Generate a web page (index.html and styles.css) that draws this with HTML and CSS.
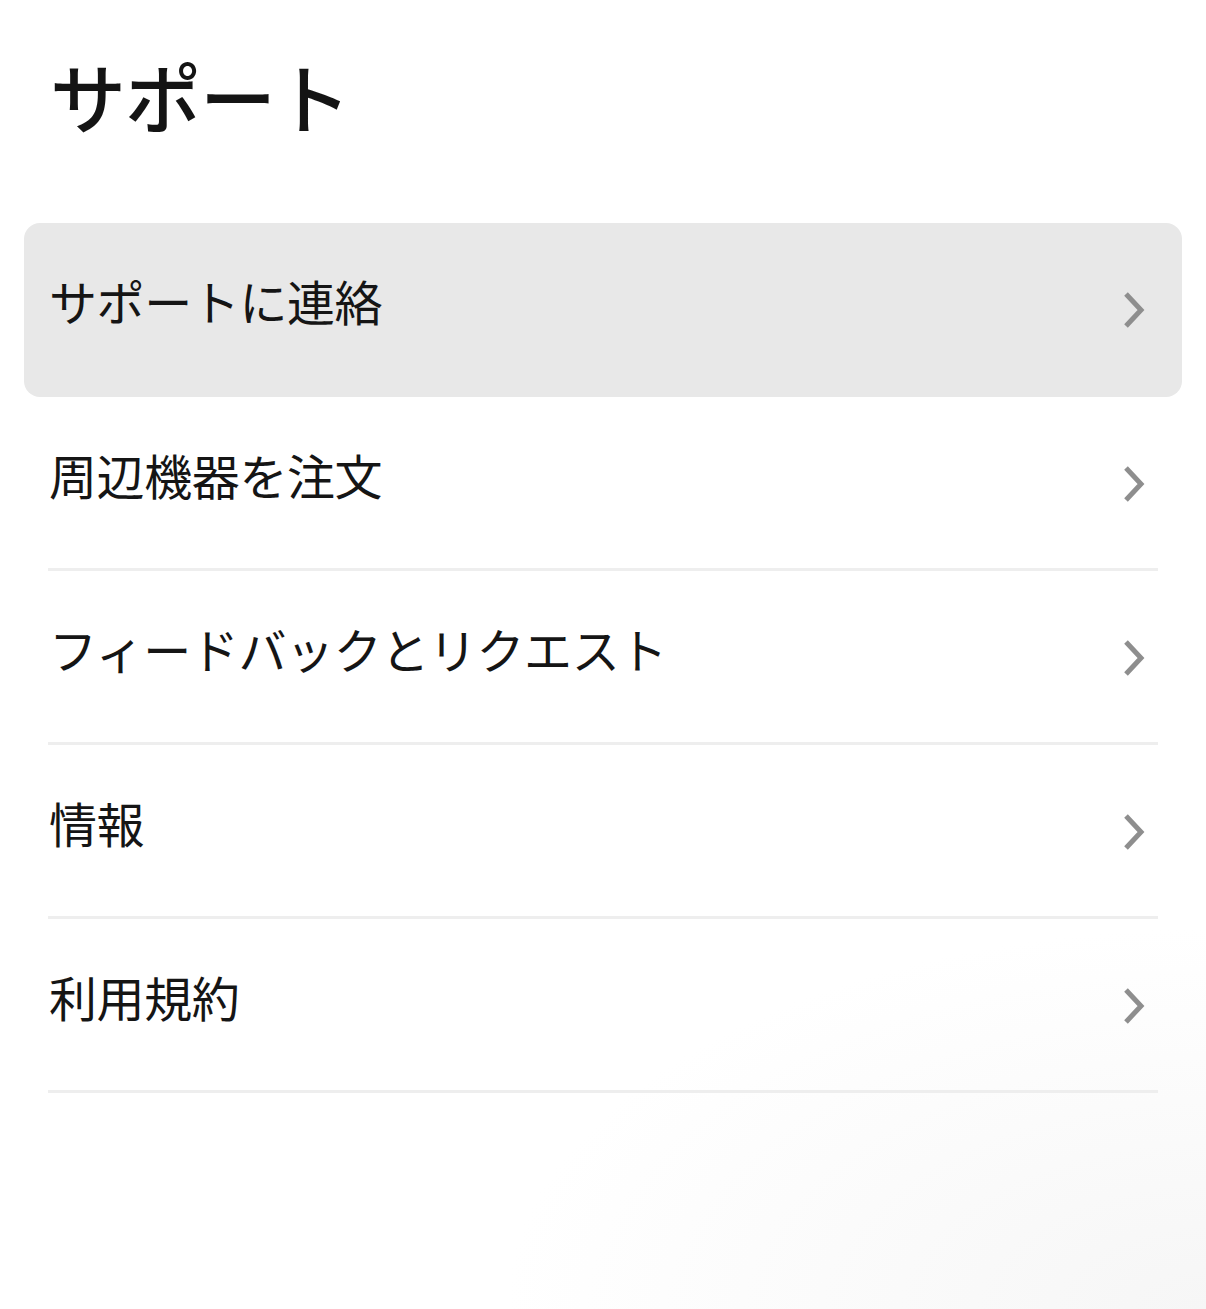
FILE: index.html
```html
<!DOCTYPE html>
<html lang="ja">

<head>
    <meta charset="UTF-8">
    <meta name="viewport" content="width=device-width, initial-scale=1.0">
    <title>サポート</title>
    <link rel="stylesheet" href="styles.css">
</head>

<body>
    <h1 class="page-title">サポート</h1>

    <ul class="menu">
        <li class="menu-item active">
            <span class="menu-label">サポートに連絡</span>
            <svg class="chevron" viewBox="0 0 24 40" width="24" height="40"><path d="M4 4 L19 20 L4 36" /></svg>
        </li>
        <li class="menu-item">
            <span class="menu-label">周辺機器を注文</span>
            <svg class="chevron" viewBox="0 0 24 40" width="24" height="40"><path d="M4 4 L19 20 L4 36" /></svg>
        </li>
        <li class="menu-item">
            <span class="menu-label">フィードバックとリクエスト</span>
            <svg class="chevron" viewBox="0 0 24 40" width="24" height="40"><path d="M4 4 L19 20 L4 36" /></svg>
        </li>
        <li class="menu-item">
            <span class="menu-label">情報</span>
            <svg class="chevron" viewBox="0 0 24 40" width="24" height="40"><path d="M4 4 L19 20 L4 36" /></svg>
        </li>
        <li class="menu-item">
            <span class="menu-label">利用規約</span>
            <svg class="chevron" viewBox="0 0 24 40" width="24" height="40"><path d="M4 4 L19 20 L4 36" /></svg>
        </li>
    </ul>
</body>
</html>
```

FILE: styles.css
```css
html {
    height: 100%;
}

body {
    margin: 0;
    min-height: 100%;
    font-family: "Noto Sans CJK JP", "Noto Sans", sans-serif;
    color: #141414;
    background: radial-gradient(ellipse 700px 380px at 100% 100%, #f6f6f6 0%, #fbfbfb 55%, #ffffff 100%);
}

.page-title {
    margin: 0;
    padding: 57px 0 0 50px;
    font-size: 76px;
    line-height: 76px;
    font-weight: 500;
    letter-spacing: -1px;
}

.menu {
    list-style: none;
    margin: 90px 24px 0;
    padding: 0;
}

.menu-item {
    position: relative;
    display: flex;
    align-items: center;
    justify-content: space-between;
    height: 174px;
    padding: 0 36px 0 25px;
    box-sizing: border-box;
    cursor: pointer;
}

.menu-item::after {
    content: "";
    position: absolute;
    left: 24px;
    right: 24px;
    bottom: 0;
    height: 3px;
    background-color: #eeeeee;
}

.menu-item.active {
    background-color: #e8e8e8;
    border-radius: 16px;
}

.menu-item.active::after {
    display: none;
}

.menu-label {
    font-size: 48px;
    line-height: 1;
    margin-bottom: 20px;
    letter-spacing: -0.4px;
    color: #151515;
}

.chevron {
    flex-shrink: 0;
}

.chevron path {
    fill: none;
    stroke: #8e8e8e;
    stroke-width: 5;
}
```
